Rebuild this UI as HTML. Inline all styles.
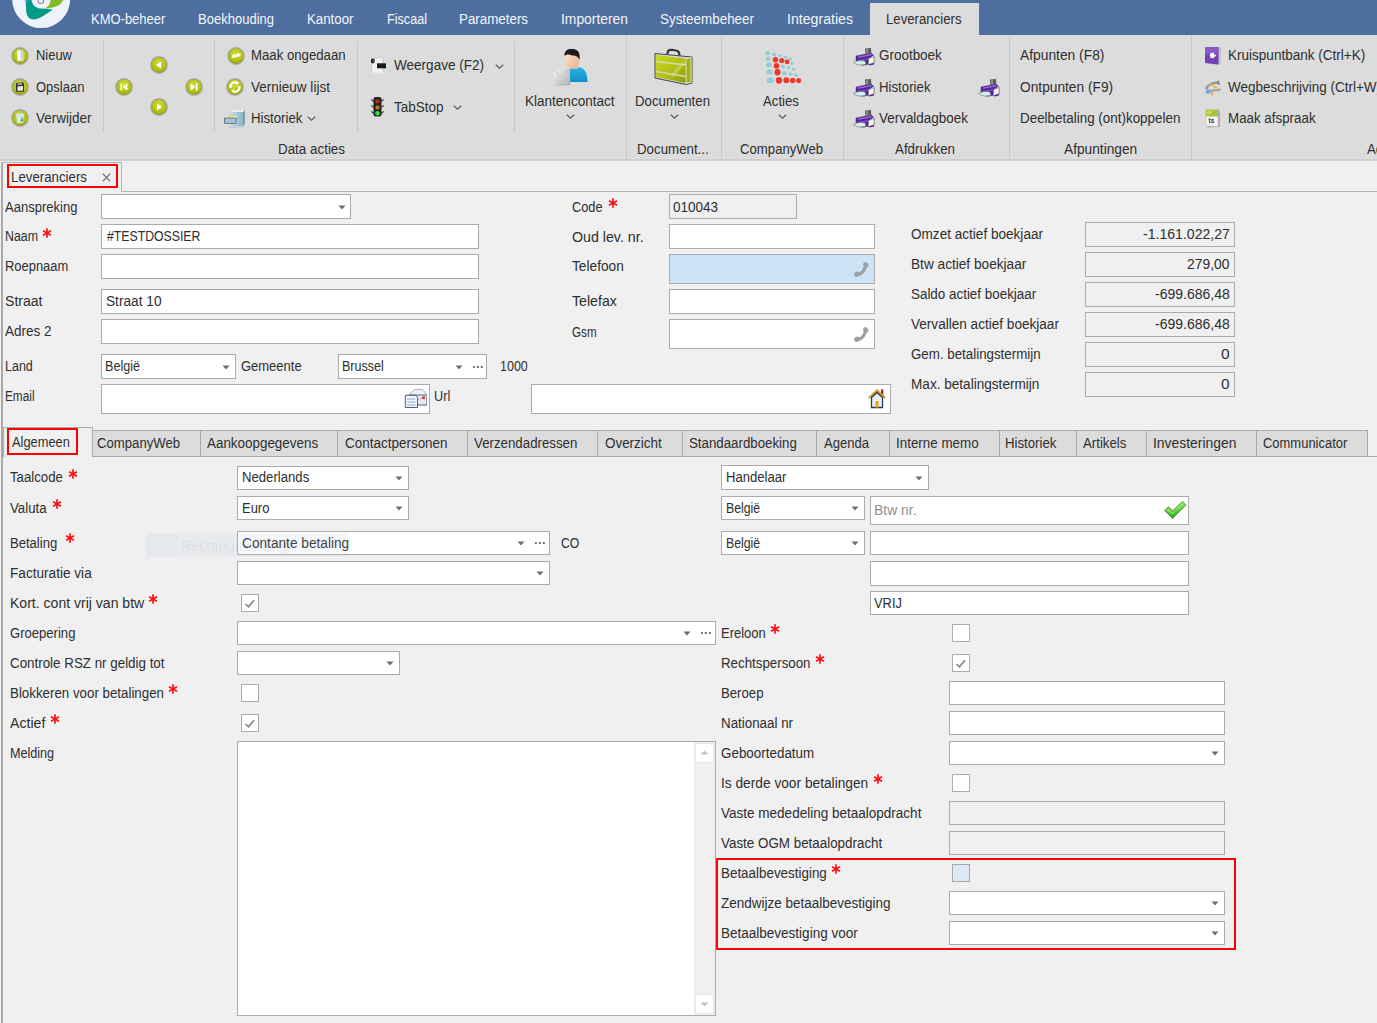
<!DOCTYPE html><html><head><meta charset="utf-8"><style>
*{margin:0;padding:0;box-sizing:border-box}
html,body{width:1377px;height:1023px;overflow:hidden}
body{background:#f0f0f0;font-family:"Liberation Sans",sans-serif;font-size:14px;color:#2e2e2e;position:relative}
.a{position:absolute}
.t{position:absolute;white-space:nowrap;line-height:15px}
</style></head><body>
<div class="a" style="left:0px;top:0px;width:1377px;height:35px;background:#4e6e9f;"></div>
<svg class="a" style="left:0px;top:0px;" width="80" height="35" viewBox="0 0 80 35">
<circle cx="41.2" cy="-0.9" r="29" fill="#eef2fb"/>
<path d="M25.6,0 L31.5,0 C32,5 36.5,8.6 41.5,8.6 L52.8,9.4 C47.5,13 40.5,18.6 34.5,19.4 C29.5,19.8 26.6,16.5 26.2,11 Z" fill="#009b82"/>
<path d="M44.2,8.9 C50.5,8.6 57.5,6.8 60.8,3.6 L63.4,0 L50.6,0 C50.2,4.2 47.8,7.4 44.2,8.9 Z" fill="#84bb24"/>
<path d="M25.6,0 L28.6,0 L26,3.5 Z" fill="#3a95d8"/>
<path d="M38.3,0 L38.3,2.2 C38.3,3 39,3.2 41,3.2 C43,3.2 43.6,3 43.6,2 L43.6,0" fill="none" stroke="#8a8a8a" stroke-width="1.1"/>
</svg>
<div class="t" style="left:90.5px;top:12px;color:#f4f6fa;transform:scaleX(0.9271);transform-origin:0 0">KMO-beheer</div>
<div class="t" style="left:198px;top:12px;color:#f4f6fa;transform:scaleX(0.9298);transform-origin:0 0">Boekhouding</div>
<div class="t" style="left:307px;top:12px;color:#f4f6fa;transform:scaleX(0.9483);transform-origin:0 0">Kantoor</div>
<div class="t" style="left:387px;top:12px;color:#f4f6fa;transform:scaleX(0.9020);transform-origin:0 0">Fiscaal</div>
<div class="t" style="left:459px;top:12px;color:#f4f6fa;transform:scaleX(0.9536);transform-origin:0 0">Parameters</div>
<div class="t" style="left:561px;top:12px;color:#f4f6fa;transform:scaleX(0.9897);transform-origin:0 0">Importeren</div>
<div class="t" style="left:660px;top:12px;color:#f4f6fa;transform:scaleX(0.9586);transform-origin:0 0">Systeembeheer</div>
<div class="t" style="left:787px;top:12px;color:#f4f6fa;transform:scaleX(1.0096);transform-origin:0 0">Integraties</div>
<div class="a" style="left:870px;top:3px;width:109px;height:32px;background:#dcdcdc;"></div>
<div class="t" style="left:886px;top:12px;transform:scaleX(0.9419);transform-origin:0 0">Leveranciers</div>
<div class="a" style="left:0px;top:35px;width:1377px;height:124px;background:#dcdcdc;"></div>
<div class="a" style="left:0px;top:159px;width:1377px;height:2px;background:#cecece;"></div>
<div class="a" style="left:103px;top:41px;width:1px;height:91px;background:#c6c6c6;"></div>
<div class="a" style="left:214px;top:41px;width:1px;height:91px;background:#c6c6c6;"></div>
<div class="a" style="left:357px;top:41px;width:1px;height:91px;background:#c6c6c6;"></div>
<div class="a" style="left:514px;top:41px;width:1px;height:91px;background:#c6c6c6;"></div>
<div class="a" style="left:626px;top:35px;width:1px;height:124px;background:#cacaca;"></div>
<div class="a" style="left:721px;top:35px;width:1px;height:124px;background:#cacaca;"></div>
<div class="a" style="left:843px;top:35px;width:1px;height:124px;background:#cacaca;"></div>
<div class="a" style="left:1009px;top:35px;width:1px;height:124px;background:#cacaca;"></div>
<div class="a" style="left:1191px;top:35px;width:1px;height:124px;background:#cacaca;"></div>
<svg class="a" style="left:10px;top:45.5px;" width="20" height="20" viewBox="0 0 20 20"><defs><radialGradient id="g200_555" cx="50%" cy="35%" r="70%"><stop offset="0" stop-color="#d4de3a"/><stop offset="0.6" stop-color="#b6c312"/><stop offset="1" stop-color="#97a40a"/></radialGradient></defs>
<circle cx="10" cy="10" r="9.2" fill="#c6c6c6"/><circle cx="10" cy="10" r="8.4" fill="#9c9c94"/><circle cx="10" cy="10" r="7.6" fill="url(#g200_555)"/><g transform="translate(0.5,0.5)"><path d="M6.5,4 L12.5,3.5 L13,14 L7,14.5 Z" fill="#f2f6f9"/><path d="M10,3.8 L12.5,3.5 L13,14 L10.5,14.3 Z" fill="#c8d6e0"/></g></svg>
<svg class="a" style="left:10px;top:76.5px;" width="20" height="20" viewBox="0 0 20 20"><defs><radialGradient id="g200_865" cx="50%" cy="35%" r="70%"><stop offset="0" stop-color="#d4de3a"/><stop offset="0.6" stop-color="#b6c312"/><stop offset="1" stop-color="#97a40a"/></radialGradient></defs>
<circle cx="10" cy="10" r="9.2" fill="#c6c6c6"/><circle cx="10" cy="10" r="8.4" fill="#9c9c94"/><circle cx="10" cy="10" r="7.6" fill="url(#g200_865)"/><g transform="translate(0.5,0.5)"><path d="M5.5,5.5 L12,4.5 L13.5,6 L13.5,14 L6.5,14.5 L5.5,13.5 Z" fill="#333"/><path d="M7,9 L12.5,8.5 L12.5,13 L7,13.5 Z" fill="#e9e9e9"/><path d="M7,5 L11.5,4.8 L11.5,7.5 L7,7.8 Z" fill="#9a9a9a"/></g></svg>
<svg class="a" style="left:10px;top:108px;" width="20" height="20" viewBox="0 0 20 20"><defs><radialGradient id="g200_1180" cx="50%" cy="35%" r="70%"><stop offset="0" stop-color="#d4de3a"/><stop offset="0.6" stop-color="#b6c312"/><stop offset="1" stop-color="#97a40a"/></radialGradient></defs>
<circle cx="10" cy="10" r="9.2" fill="#c6c6c6"/><circle cx="10" cy="10" r="8.4" fill="#9c9c94"/><circle cx="10" cy="10" r="7.6" fill="url(#g200_1180)"/><g transform="translate(0.5,0.5)"><path d="M5.5,5 L13.5,5 L12.5,14.5 L6.5,14.5 Z" fill="#d6e8f4"/><path d="M11,9 L12,12 L10,12.5" fill="none" stroke="#43b443" stroke-width="1.3"/></g></svg>
<div class="t" style="left:35.5px;top:48px;transform:scaleX(0.9228);transform-origin:0 0">Nieuw</div>
<div class="t" style="left:35.5px;top:80px;transform:scaleX(0.9282);transform-origin:0 0">Opslaan</div>
<div class="t" style="left:35.5px;top:111px;transform:scaleX(0.9639);transform-origin:0 0">Verwijder</div>
<svg class="a" style="left:114px;top:76.5px;" width="20" height="20" viewBox="0 0 20 20"><defs><radialGradient id="g1240_865" cx="50%" cy="35%" r="70%"><stop offset="0" stop-color="#d4de3a"/><stop offset="0.6" stop-color="#b6c312"/><stop offset="1" stop-color="#97a40a"/></radialGradient></defs>
<circle cx="10" cy="10" r="9.2" fill="#c6c6c6"/><circle cx="10" cy="10" r="8.4" fill="#9c9c94"/><circle cx="10" cy="10" r="7.6" fill="url(#g1240_865)"/><g transform="translate(0.5,0.5)"><path d="M6,6 L7.6,6 L7.6,13 L6,13 Z M13,6 L8,9.5 L13,13 Z" fill="#fff"/></g></svg>
<svg class="a" style="left:148.6px;top:55.400000000000006px;" width="20" height="20" viewBox="0 0 20 20"><defs><radialGradient id="g1586_654" cx="50%" cy="35%" r="70%"><stop offset="0" stop-color="#d4de3a"/><stop offset="0.6" stop-color="#b6c312"/><stop offset="1" stop-color="#97a40a"/></radialGradient></defs>
<circle cx="10" cy="10" r="9.2" fill="#c6c6c6"/><circle cx="10" cy="10" r="8.4" fill="#9c9c94"/><circle cx="10" cy="10" r="7.6" fill="url(#g1586_654)"/><g transform="translate(0.5,0.5)"><path d="M11.5,6 L6.5,9.5 L11.5,13 Z" fill="#fff"/></g></svg>
<svg class="a" style="left:148.6px;top:97px;" width="20" height="20" viewBox="0 0 20 20"><defs><radialGradient id="g1586_1070" cx="50%" cy="35%" r="70%"><stop offset="0" stop-color="#d4de3a"/><stop offset="0.6" stop-color="#b6c312"/><stop offset="1" stop-color="#97a40a"/></radialGradient></defs>
<circle cx="10" cy="10" r="9.2" fill="#c6c6c6"/><circle cx="10" cy="10" r="8.4" fill="#9c9c94"/><circle cx="10" cy="10" r="7.6" fill="url(#g1586_1070)"/><g transform="translate(0.5,0.5)"><path d="M7.5,6 L12.5,9.5 L7.5,13 Z" fill="#fff"/></g></svg>
<svg class="a" style="left:184px;top:76.5px;" width="20" height="20" viewBox="0 0 20 20"><defs><radialGradient id="g1940_865" cx="50%" cy="35%" r="70%"><stop offset="0" stop-color="#d4de3a"/><stop offset="0.6" stop-color="#b6c312"/><stop offset="1" stop-color="#97a40a"/></radialGradient></defs>
<circle cx="10" cy="10" r="9.2" fill="#c6c6c6"/><circle cx="10" cy="10" r="8.4" fill="#9c9c94"/><circle cx="10" cy="10" r="7.6" fill="url(#g1940_865)"/><g transform="translate(0.5,0.5)"><path d="M11.4,6 L13,6 L13,13 L11.4,13 Z M6,6 L11,9.5 L6,13 Z" fill="#fff"/></g></svg>
<svg class="a" style="left:225.5px;top:46px;" width="20" height="20" viewBox="0 0 20 20"><defs><radialGradient id="g2355_560" cx="50%" cy="35%" r="70%"><stop offset="0" stop-color="#d4de3a"/><stop offset="0.6" stop-color="#b6c312"/><stop offset="1" stop-color="#97a40a"/></radialGradient></defs>
<circle cx="10" cy="10" r="9.2" fill="#c6c6c6"/><circle cx="10" cy="10" r="8.4" fill="#9c9c94"/><circle cx="10" cy="10" r="7.6" fill="url(#g2355_560)"/><g transform="translate(0.5,0.5)"><path d="M5,11 L6.5,7.5 L9.5,8.2 L12,6.5 L14.5,8 L13,10 L9,10.5 L7.5,11.5 Z" fill="#fff"/></g></svg>
<svg class="a" style="left:225px;top:76.5px;" width="20" height="20" viewBox="0 0 20 20"><defs><radialGradient id="g2350_865" cx="50%" cy="35%" r="70%"><stop offset="0" stop-color="#d4de3a"/><stop offset="0.6" stop-color="#b6c312"/><stop offset="1" stop-color="#97a40a"/></radialGradient></defs>
<circle cx="10" cy="10" r="9.2" fill="#c6c6c6"/><circle cx="10" cy="10" r="8.4" fill="#9c9c94"/><circle cx="10" cy="10" r="7.6" fill="url(#g2350_865)"/><g transform="translate(0.5,0.5)"><path d="M5.2,10.5 A4.5,4.5 0 0 1 11.5,5.2" fill="none" stroke="#fff" stroke-width="2"/><path d="M10.5,3.5 L13.5,5.5 L10.5,7.5 Z" fill="#fff"/><path d="M13.8,8.5 A4.5,4.5 0 0 1 7.5,13.8" fill="none" stroke="#fff" stroke-width="2"/><path d="M8.5,11.5 L5.5,13.5 L8.5,15.5 Z" fill="#fff"/></g></svg>
<div class="t" style="left:250.5px;top:48px;transform:scaleX(0.9421);transform-origin:0 0">Maak ongedaan</div>
<div class="t" style="left:250.5px;top:80px;transform:scaleX(0.9657);transform-origin:0 0">Vernieuw lijst</div>
<div class="t" style="left:250.5px;top:111px;transform:scaleX(0.9439);transform-origin:0 0">Historiek</div>
<svg class="a" style="left:224px;top:109px;" width="22" height="19" viewBox="0 0 22 19"><defs><linearGradient id="hc" x1="0" y1="0" x2="1" y2="0"><stop offset="0" stop-color="#c6e0ea"/><stop offset="1" stop-color="#8fb4c4"/></linearGradient></defs>
<path d="M6,3 L9,1 L21,1 L19,3 Z" fill="#e2eff4"/>
<path d="M6,3 L19,3 L19,17 L6,17 Z" fill="url(#hc)"/><path d="M19,3 L21,1 L21,15 L19,17 Z" fill="#7f9fae"/>
<path d="M0.5,9 L4,7 L13,7 L12,9 Z" fill="#dfe9ee"/>
<path d="M0.5,9 L12,9 L12,14.5 L0.5,14.5 Z" fill="#a7c0cc" stroke="#4f6a78" stroke-width="0.8"/>
<path d="M3,7.5 L6,6 L10.5,6 L9,8 Z" fill="#f2d447"/>
<path d="M4,18 L20,18" stroke="#9aa" stroke-width="1" opacity="0.5"/></svg>
<svg class="a" style="left:306.5px;top:115.5px;" width="9" height="5" viewBox="0 0 9 5"><polyline points="0.8,0.8 4.5,4.2 8.2,0.8" fill="none" stroke="#5a5a5a" stroke-width="1.2"/></svg>
<svg class="a" style="left:369px;top:55px;" width="18" height="20" viewBox="0 0 18 20"><path d="M2.5,4 L12,2 L14,4 L14,16 C14,18 11,18.5 8,18.5 C5,18.5 2.5,18 2.5,16 Z" fill="#f2f2f2" stroke="#c0c0c0" stroke-width="0.7"/>
<path d="M11,1 C13,0.5 15,1.5 15,3.5 L12,4 Z" fill="#dadada"/>
<ellipse cx="3.8" cy="6" rx="2" ry="2.4" fill="#1e1e1e"/><circle cx="4.3" cy="6" r="0.9" fill="#2a8a3a"/>
<rect x="8" y="8.3" width="9" height="5" fill="#1a1a1a"/><path d="M2,17 L15,17 L15,19 L2,19 Z" fill="#e6e6e6"/></svg>
<div class="t" style="left:393.5px;top:58px;transform:scaleX(0.9677);transform-origin:0 0">Weergave (F2)</div>
<svg class="a" style="left:494.5px;top:63.5px;" width="9" height="5" viewBox="0 0 9 5"><polyline points="0.8,0.8 4.5,4.2 8.2,0.8" fill="none" stroke="#5a5a5a" stroke-width="1.2"/></svg>
<svg class="a" style="left:370px;top:96px;" width="15" height="22" viewBox="0 0 15 22"><rect x="3.5" y="1" width="8" height="19.5" rx="2" fill="#262626"/>
<path d="M0.5,3 L3.5,4 L3.5,6.5 Z M14.5,3 L11.5,4 L11.5,6.5 Z M0.5,9 L3.5,10 L3.5,12.5 Z M14.5,9 L11.5,10 L11.5,12.5 Z M0.5,15 L3.5,16 L3.5,18.5 Z M14.5,15 L11.5,16 L11.5,18.5 Z" fill="#333"/>
<circle cx="7.5" cy="5.5" r="2" fill="#b8321e"/><circle cx="7.5" cy="11.5" r="2" fill="#c97d12"/><circle cx="7.5" cy="17.2" r="2.3" fill="#2ee03a"/></svg>
<div class="t" style="left:393.5px;top:100px;transform:scaleX(0.9636);transform-origin:0 0">TabStop</div>
<svg class="a" style="left:452.5px;top:104.5px;" width="9" height="5" viewBox="0 0 9 5"><polyline points="0.8,0.8 4.5,4.2 8.2,0.8" fill="none" stroke="#5a5a5a" stroke-width="1.2"/></svg>
<div class="t" style="left:278px;top:142px;transform:scaleX(0.9567);transform-origin:0 0">Data acties</div>
<svg class="a" style="left:550px;top:46px;" width="40" height="42" viewBox="0 0 40 42"><defs><linearGradient id="kc" x1="0" y1="0" x2="0" y2="1"><stop offset="0" stop-color="#2ab4e4"/><stop offset="1" stop-color="#1290c8"/></linearGradient>
<linearGradient id="kf" x1="0" y1="0" x2="1" y2="1"><stop offset="0" stop-color="#fde3cf"/><stop offset="1" stop-color="#eab08a"/></linearGradient>
<linearGradient id="ke" x1="0" y1="0" x2="1" y2="1"><stop offset="0" stop-color="#f4f4f4"/><stop offset="1" stop-color="#a9adb0"/></linearGradient></defs>
<path d="M15,36 C15,26 20,21 27,21 C34,21 37.5,26 37.5,36 Z" fill="url(#kc)"/>
<path d="M22,19 L28,19 L27.5,23 L22.5,23 Z" fill="#e8b894"/>
<ellipse cx="22" cy="13.5" rx="7.2" ry="9" fill="url(#kf)"/>
<path d="M14.5,10 C14,4 18.5,2.5 23,3 C28,3.5 30.5,6.5 29.5,14 C28.5,11 26,9 22,9.5 C19,8 16.5,8.5 14.5,10 Z" fill="#1c1c1c"/>
<path d="M3.5,24 L19.5,22 L20.5,39 L4.5,40.5 Z" fill="url(#ke)"/>
<path d="M3.5,24 L12,31.5 L19.5,22" fill="none" stroke="#c4c8cb" stroke-width="1"/></svg>
<div class="t" style="left:524.5px;top:94px;transform:scaleX(0.9663);transform-origin:0 0">Klantencontact</div>
<svg class="a" style="left:565.5px;top:113.5px;" width="9" height="5" viewBox="0 0 9 5"><polyline points="0.8,0.8 4.5,4.2 8.2,0.8" fill="none" stroke="#5a5a5a" stroke-width="1.2"/></svg>
<svg class="a" style="left:652px;top:47px;" width="42" height="40" viewBox="0 0 42 40"><defs><linearGradient id="bc" x1="0" y1="0" x2="1" y2="1"><stop offset="0" stop-color="#cbd91e"/><stop offset="0.5" stop-color="#b3c118"/><stop offset="1" stop-color="#8e9a0c"/></linearGradient></defs>
<path d="M15.5,7 C15.5,3 17,2.5 21.5,3 C26,3.5 27.5,4.5 27.5,8.5" fill="none" stroke="#333" stroke-width="2.2"/>
<path d="M3,6.5 L40,10 L40,36 L34,37.5 L3,31 Z" fill="#d8d8d8" stroke="#444" stroke-width="1"/>
<path d="M4,8 L34,11.5 L34,36 L4,30 Z" fill="url(#bc)"/>
<path d="M34,11.5 L39,10.5 L39,35.5 L34,36 Z" fill="#a4b214" stroke="#e8e8e8" stroke-width="0.8"/>
<path d="M4,14.5 L34,18" stroke="#d6dcb8" stroke-width="1.6"/><path d="M4,24.5 L34,29.5" stroke="#d0d6b0" stroke-width="1.6"/>
<path d="M18,28 L30,14 L34,16 L22,30 Z" fill="#e8ef9a" opacity="0.35"/></svg>
<div class="t" style="left:635.3px;top:94px;transform:scaleX(0.9448);transform-origin:0 0">Documenten</div>
<svg class="a" style="left:669.5px;top:113.5px;" width="9" height="5" viewBox="0 0 9 5"><polyline points="0.8,0.8 4.5,4.2 8.2,0.8" fill="none" stroke="#5a5a5a" stroke-width="1.2"/></svg>
<svg class="a" style="left:760px;top:46px;" width="46" height="44" viewBox="0 0 46 44"><ellipse cx="7.5" cy="7.2" rx="2.5" ry="2.1" fill="#92ccd6"/><ellipse cx="14.0" cy="8.5" rx="2.2" ry="1.8" fill="#92ccd6"/><ellipse cx="20.0" cy="9.8" rx="1.9" ry="1.5" fill="#92ccd6"/><ellipse cx="25.5" cy="11.2" rx="1.7" ry="1.4" fill="#92ccd6"/><ellipse cx="30.5" cy="12.8" rx="1.7" ry="1.4" fill="#92ccd6"/><ellipse cx="8.0" cy="12.8" rx="2.5" ry="2.1" fill="#92ccd6"/><ellipse cx="31.8" cy="17.5" rx="1.8" ry="1.4" fill="#92ccd6"/><ellipse cx="8.8" cy="19.0" rx="2.9" ry="2.3" fill="#92ccd6"/><ellipse cx="22.8" cy="20.6" rx="2.2" ry="1.8" fill="#92ccd6"/><ellipse cx="28.5" cy="21.5" rx="2.0" ry="1.6" fill="#92ccd6"/><ellipse cx="33.8" cy="23.4" rx="1.8" ry="1.4" fill="#92ccd6"/><ellipse cx="9.5" cy="26.0" rx="3.1" ry="2.5" fill="#92ccd6"/><ellipse cx="24.5" cy="27.2" rx="2.4" ry="2.0" fill="#92ccd6"/><ellipse cx="30.5" cy="28.0" rx="2.2" ry="1.8" fill="#92ccd6"/><ellipse cx="36.0" cy="29.0" rx="1.9" ry="1.5" fill="#92ccd6"/><ellipse cx="10.3" cy="34.4" rx="3.4" ry="2.8" fill="#92ccd6"/><ellipse cx="15.5" cy="13.8" rx="2.7" ry="2.8" fill="#ec3a2a"/><ellipse cx="21.8" cy="14.6" rx="2.6" ry="2.7" fill="#ec3a2a"/><ellipse cx="27.2" cy="15.7" rx="2.4" ry="2.5" fill="#ec3a2a"/><ellipse cx="16.5" cy="19.8" rx="2.8" ry="2.9" fill="#ec3a2a"/><ellipse cx="17.5" cy="26.3" rx="3.0" ry="3.2" fill="#ec3a2a"/><ellipse cx="19.0" cy="34.3" rx="3.2" ry="3.4" fill="#ec3a2a"/><ellipse cx="26.3" cy="34.3" rx="2.9" ry="3.0" fill="#ec3a2a"/><ellipse cx="32.6" cy="34.5" rx="2.7" ry="2.8" fill="#ec3a2a"/><ellipse cx="38.6" cy="34.5" rx="2.5" ry="2.6" fill="#ec3a2a"/></svg>
<div class="t" style="left:763.4px;top:94px;transform:scaleX(0.9417);transform-origin:0 0">Acties</div>
<svg class="a" style="left:778.0px;top:113.5px;" width="9" height="5" viewBox="0 0 9 5"><polyline points="0.8,0.8 4.5,4.2 8.2,0.8" fill="none" stroke="#5a5a5a" stroke-width="1.2"/></svg>
<div class="t" style="left:636.6px;top:142px;transform:scaleX(0.9500);transform-origin:0 0">Document...</div>
<div class="t" style="left:739.5px;top:142px;transform:scaleX(0.9406);transform-origin:0 0">CompanyWeb</div>
<svg class="a" style="left:853px;top:48px;" width="22" height="18" viewBox="0 0 22 18"><path d="M12,0.5 L18,0 L18.5,7 L12.5,7.5 Z" fill="#5c5c5c"/><path d="M13,1 L15,0.8 L15.3,7 L13.3,7.2 Z" fill="#8a8a8a"/>
<path d="M3,8 L18,5 L21,7.5 L21,15 L9,17.5 L3,14 Z" fill="#e4e4e4" stroke="#5a5a5a" stroke-width="0.6"/>
<path d="M3,8 L18,5 L20.5,7.2 L16,11 L15.5,16.5 L9,17 L3,13.5 Z" fill="#58289a"/>
<path d="M5,9.3 L18.5,6.6" stroke="#a07ad8" stroke-width="1.1"/><path d="M5,12.5 L15,10.8" stroke="#8a5ac8" stroke-width="0.9"/>
<path d="M15.5,10.5 L21,8.8 L21,15 L15.5,16.8 Z" fill="#f2f2f2" stroke="#6a6a6a" stroke-width="0.5"/>
<path d="M16,16.2 L21,14.8 L21,16.4 L16.5,17.6 Z" fill="#58289a"/>
<path d="M0.5,14.5 C3,12.5 9,12 12,13 L13,16 C9,17.5 4,17.5 0.5,14.5 Z" fill="#d6eef0" stroke="#5e6e70" stroke-width="0.6"/></svg>
<svg class="a" style="left:853px;top:79px;" width="22" height="18" viewBox="0 0 22 18"><path d="M12,0.5 L18,0 L18.5,7 L12.5,7.5 Z" fill="#5c5c5c"/><path d="M13,1 L15,0.8 L15.3,7 L13.3,7.2 Z" fill="#8a8a8a"/>
<path d="M3,8 L18,5 L21,7.5 L21,15 L9,17.5 L3,14 Z" fill="#e4e4e4" stroke="#5a5a5a" stroke-width="0.6"/>
<path d="M3,8 L18,5 L20.5,7.2 L16,11 L15.5,16.5 L9,17 L3,13.5 Z" fill="#58289a"/>
<path d="M5,9.3 L18.5,6.6" stroke="#a07ad8" stroke-width="1.1"/><path d="M5,12.5 L15,10.8" stroke="#8a5ac8" stroke-width="0.9"/>
<path d="M15.5,10.5 L21,8.8 L21,15 L15.5,16.8 Z" fill="#f2f2f2" stroke="#6a6a6a" stroke-width="0.5"/>
<path d="M16,16.2 L21,14.8 L21,16.4 L16.5,17.6 Z" fill="#58289a"/>
<path d="M0.5,14.5 C3,12.5 9,12 12,13 L13,16 C9,17.5 4,17.5 0.5,14.5 Z" fill="#d6eef0" stroke="#5e6e70" stroke-width="0.6"/></svg>
<svg class="a" style="left:853px;top:110px;" width="22" height="18" viewBox="0 0 22 18"><path d="M12,0.5 L18,0 L18.5,7 L12.5,7.5 Z" fill="#5c5c5c"/><path d="M13,1 L15,0.8 L15.3,7 L13.3,7.2 Z" fill="#8a8a8a"/>
<path d="M3,8 L18,5 L21,7.5 L21,15 L9,17.5 L3,14 Z" fill="#e4e4e4" stroke="#5a5a5a" stroke-width="0.6"/>
<path d="M3,8 L18,5 L20.5,7.2 L16,11 L15.5,16.5 L9,17 L3,13.5 Z" fill="#58289a"/>
<path d="M5,9.3 L18.5,6.6" stroke="#a07ad8" stroke-width="1.1"/><path d="M5,12.5 L15,10.8" stroke="#8a5ac8" stroke-width="0.9"/>
<path d="M15.5,10.5 L21,8.8 L21,15 L15.5,16.8 Z" fill="#f2f2f2" stroke="#6a6a6a" stroke-width="0.5"/>
<path d="M16,16.2 L21,14.8 L21,16.4 L16.5,17.6 Z" fill="#58289a"/>
<path d="M0.5,14.5 C3,12.5 9,12 12,13 L13,16 C9,17.5 4,17.5 0.5,14.5 Z" fill="#d6eef0" stroke="#5e6e70" stroke-width="0.6"/></svg>
<svg class="a" style="left:978px;top:79px;" width="22" height="18" viewBox="0 0 22 18"><path d="M12,0.5 L18,0 L18.5,7 L12.5,7.5 Z" fill="#5c5c5c"/><path d="M13,1 L15,0.8 L15.3,7 L13.3,7.2 Z" fill="#8a8a8a"/>
<path d="M3,8 L18,5 L21,7.5 L21,15 L9,17.5 L3,14 Z" fill="#e4e4e4" stroke="#5a5a5a" stroke-width="0.6"/>
<path d="M3,8 L18,5 L20.5,7.2 L16,11 L15.5,16.5 L9,17 L3,13.5 Z" fill="#58289a"/>
<path d="M5,9.3 L18.5,6.6" stroke="#a07ad8" stroke-width="1.1"/><path d="M5,12.5 L15,10.8" stroke="#8a5ac8" stroke-width="0.9"/>
<path d="M15.5,10.5 L21,8.8 L21,15 L15.5,16.8 Z" fill="#f2f2f2" stroke="#6a6a6a" stroke-width="0.5"/>
<path d="M16,16.2 L21,14.8 L21,16.4 L16.5,17.6 Z" fill="#58289a"/>
<path d="M0.5,14.5 C3,12.5 9,12 12,13 L13,16 C9,17.5 4,17.5 0.5,14.5 Z" fill="#d6eef0" stroke="#5e6e70" stroke-width="0.6"/></svg>
<div class="t" style="left:879.2px;top:48px;transform:scaleX(0.9606);transform-origin:0 0">Grootboek</div>
<div class="t" style="left:879.2px;top:80px;transform:scaleX(0.9457);transform-origin:0 0">Historiek</div>
<div class="t" style="left:879.2px;top:111px;transform:scaleX(0.9598);transform-origin:0 0">Vervaldagboek</div>
<div class="t" style="left:895px;top:142px;transform:scaleX(0.9519);transform-origin:0 0">Afdrukken</div>
<div class="t" style="left:1019.6px;top:48px;transform:scaleX(0.9860);transform-origin:0 0">Afpunten (F8)</div>
<div class="t" style="left:1019.6px;top:80px;transform:scaleX(0.9806);transform-origin:0 0">Ontpunten (F9)</div>
<div class="t" style="left:1019.6px;top:111px;transform:scaleX(0.9585);transform-origin:0 0">Deelbetaling (ont)koppelen</div>
<div class="t" style="left:1063.5px;top:142px;transform:scaleX(0.9795);transform-origin:0 0">Afpuntingen</div>
<svg class="a" style="left:1204px;top:46px;" width="18" height="19" viewBox="0 0 18 19"><path d="M1,1.5 L14,0.5 L17,2 L17,18 L14,19 L1,17 Z" fill="#c0c4c4"/>
<path d="M1,1.5 L14.5,1 L14.5,18.5 L1,17 Z" fill="#7440b4"/><path d="M1,1.5 L14.5,1 L14.5,8 L1,8.5 Z" fill="#8a5ac4"/>
<path d="M6,9 C6,6.5 9.5,6 10.5,8.5 L12.5,9.5 L10.5,11 C9.5,13 6,12.5 6,10 Z" fill="#fff"/></svg>
<svg class="a" style="left:1204px;top:79px;" width="18" height="18" viewBox="0 0 18 18"><path d="M2,10 C4,5 10,3 15,4" fill="none" stroke="#9a9a9a" stroke-width="2.4"/>
<path d="M5,6 C7,4.5 9,6 11,8 L13,9" fill="none" stroke="#e6b030" stroke-width="1.6"/>
<path d="M2,11 L17,9.5 L16,12 L3,13.5 Z" fill="#a8a8a8"/><path d="M13,3 L15,2 M14,5 L16,5" stroke="#555" stroke-width="1"/>
<circle cx="4" cy="12.5" r="2.4" fill="#6ab0e0"/><path d="M7,13 L9,16" stroke="#e0a030" stroke-width="1.4"/></svg>
<svg class="a" style="left:1205px;top:108px;" width="16" height="20" viewBox="0 0 16 20"><path d="M1,1.5 L13,1 L15,3 L15,19 L3,19.5 L1,18 Z" fill="#aeb0b0"/>
<path d="M1,1.5 L13,1 L13,18.5 L1,18 Z" fill="#f4f4f4" stroke="#b0b0b0" stroke-width="0.5"/>
<path d="M1,2 L13,1.5 L13,8.5 L1,8.5 Z" fill="#a9c23a"/><path d="M2,3 L7,2.5 L6,6 L2,6.5 Z" fill="#c8dc60"/>
<text x="3.5" y="14.5" font-size="6.5" font-weight="bold" fill="#333" font-family="Liberation Sans">ts</text></svg>
<div class="t" style="left:1228px;top:48px;transform:scaleX(0.9669);transform-origin:0 0">Kruispuntbank (Ctrl+K)</div>
<div class="t" style="left:1228px;top:80px;transform:scaleX(0.9633);transform-origin:0 0">Wegbeschrijving (Ctrl+W)</div>
<div class="t" style="left:1228px;top:111px;transform:scaleX(0.9540);transform-origin:0 0">Maak afspraak</div>
<div class="t" style="left:1367.4px;top:142px;transform:scaleX(0.9417);transform-origin:0 0">Acties</div>
<div class="a" style="left:121px;top:191px;width:1256px;height:1px;background:#b4b4b4;"></div>
<div class="a" style="left:1px;top:162px;width:121px;height:30px;background:#f0f0f0;border:1px solid #b4b4b4;border-bottom:none"></div>
<div class="a" style="left:7px;top:164px;width:111px;height:24px;border:2px solid #ff0000"></div>
<div class="t" style="left:10.5px;top:170px;transform:scaleX(0.9482);transform-origin:0 0">Leveranciers</div>
<svg class="a" style="left:102px;top:173px;" width="9" height="9" viewBox="0 0 9 9"><path d="M0.8,0.8 L8.2,8.2 M8.2,0.8 L0.8,8.2" stroke="#7a7a7a" stroke-width="1.3"/></svg>
<div class="a" style="left:1px;top:163px;width:2px;height:860px;background:#a9a9a9;"></div>
<div class="t" style="left:4.7px;top:200px;transform:scaleX(0.9315);transform-origin:0 0">Aanspreking</div>
<div class="a" style="left:101px;top:194px;width:250px;height:25px;background:#fff;border:1px solid #ababab;"></div>
<svg class="a" style="left:338px;top:205px;" width="8" height="5" viewBox="0 0 8 5"><polygon points="0.5,0.5 7.5,0.5 4,4.5" fill="#6e6e6e"/></svg>
<div class="t" style="left:4.7px;top:229px;transform:scaleX(0.8836);transform-origin:0 0">Naam</div>
<svg class="a" style="left:42px;top:228px;" width="10" height="10" viewBox="0 0 10 10"><g stroke="#ff1010" stroke-width="1.7" stroke-linecap="butt"><line x1="5" y1="0.3" x2="5" y2="9.7"/><line x1="1" y1="2.7" x2="9" y2="7.3"/><line x1="1" y1="7.3" x2="9" y2="2.7"/></g></svg>
<div class="a" style="left:101px;top:224px;width:378px;height:25px;background:#fff;border:1px solid #ababab;"></div>
<div class="t" style="left:106.6px;top:229px;transform:scaleX(0.8764);transform-origin:0 0">#TESTDOSSIER</div>
<div class="t" style="left:4.7px;top:259px;transform:scaleX(0.9228);transform-origin:0 0">Roepnaam</div>
<div class="a" style="left:101px;top:254px;width:378px;height:25px;background:#fff;border:1px solid #ababab;"></div>
<div class="t" style="left:4.7px;top:294px;transform:scaleX(1.0040);transform-origin:0 0">Straat</div>
<div class="a" style="left:101px;top:289px;width:378px;height:25px;background:#fff;border:1px solid #ababab;"></div>
<div class="t" style="left:105.6px;top:294px;transform:scaleX(0.9769);transform-origin:0 0">Straat 10</div>
<div class="t" style="left:4.7px;top:324px;transform:scaleX(0.9638);transform-origin:0 0">Adres 2</div>
<div class="a" style="left:101px;top:319px;width:378px;height:25px;background:#fff;border:1px solid #ababab;"></div>
<div class="t" style="left:4.7px;top:359px;transform:scaleX(0.8926);transform-origin:0 0">Land</div>
<div class="a" style="left:101px;top:354px;width:135px;height:25px;background:#fff;border:1px solid #ababab;"></div>
<svg class="a" style="left:222px;top:365px;" width="8" height="5" viewBox="0 0 8 5"><polygon points="0.5,0.5 7.5,0.5 4,4.5" fill="#6e6e6e"/></svg>
<div class="t" style="left:105.3px;top:359px;transform:scaleX(0.8994);transform-origin:0 0">België</div>
<div class="t" style="left:241px;top:359px;transform:scaleX(0.9270);transform-origin:0 0">Gemeente</div>
<div class="a" style="left:338px;top:354px;width:149px;height:25px;background:#fff;border:1px solid #ababab;"></div>
<svg class="a" style="left:455px;top:365px;" width="8" height="5" viewBox="0 0 8 5"><polygon points="0.5,0.5 7.5,0.5 4,4.5" fill="#6e6e6e"/></svg>
<svg class="a" style="left:473px;top:366px;" width="10" height="2" viewBox="0 0 10 2"><rect x="-0.2" y="0" width="2" height="2" fill="#6e6e6e"/><rect x="3.8" y="0" width="2" height="2" fill="#6e6e6e"/><rect x="7.8" y="0" width="2" height="2" fill="#6e6e6e"/></svg>
<div class="t" style="left:342px;top:359px;transform:scaleX(0.8933);transform-origin:0 0">Brussel</div>
<div class="t" style="left:499.6px;top:359px;transform:scaleX(0.8926);transform-origin:0 0">1000</div>
<div class="t" style="left:4.7px;top:389px;transform:scaleX(0.8427);transform-origin:0 0">Email</div>
<div class="a" style="left:101px;top:384px;width:329px;height:30px;background:#fff;border:1px solid #ababab;"></div>
<svg class="a" style="left:404px;top:388px;" width="23" height="21" viewBox="0 0 23 21"><path d="M5,7 L10.2,1.5 L18.5,1.5 L23,7" fill="#eef2f8" stroke="#9aaac0" stroke-width="0.9"/>
<path d="M5,7 L23,7 L23,17 L5,17 Z" fill="#e4eaf4" stroke="#3d4e6e" stroke-width="0.9"/>
<path d="M5,7 L14,12 L23,7" fill="none" stroke="#a8b8d0" stroke-width="0.8"/>
<rect x="18" y="8.5" width="3" height="2.6" fill="#e0401a"/>
<path d="M1.3,7.3 L11.5,7.3 L13.5,9.5 L13.5,19.5 L1.3,19.5 Z" fill="#f4f7fc" stroke="#3d4e6e" stroke-width="0.9"/>
<path d="M3,11 H11.5 M3,14 H11.5 M3,17 H11.5" stroke="#8aa4d8" stroke-width="1"/></svg>
<div class="t" style="left:434.3px;top:389px;transform:scaleX(0.9059);transform-origin:0 0">Url</div>
<div class="a" style="left:531px;top:384px;width:360px;height:30px;background:#fff;border:1px solid #ababab;"></div>
<svg class="a" style="left:867px;top:388px;" width="20" height="21" viewBox="0 0 20 21"><rect x="14" y="1.5" width="2.4" height="6" fill="#a02828"/>
<path d="M2,10 L10,2.5 L18,10" fill="none" stroke="#d89a18" stroke-width="2.2" stroke-linejoin="miter"/>
<path d="M4.5,9.5 L10,4.5 L15.5,9.5 L15.5,19.5 L4.5,19.5 Z" fill="#e9eef8" stroke="#2e3a58" stroke-width="1.3"/>
<rect x="8.5" y="13" width="3" height="6.5" fill="#e8a810"/></svg>
<div class="t" style="left:571.9px;top:200px;transform:scaleX(0.9143);transform-origin:0 0">Code</div>
<svg class="a" style="left:607.5px;top:198px;" width="10" height="10" viewBox="0 0 10 10"><g stroke="#ff1010" stroke-width="1.7" stroke-linecap="butt"><line x1="5" y1="0.3" x2="5" y2="9.7"/><line x1="1" y1="2.7" x2="9" y2="7.3"/><line x1="1" y1="7.3" x2="9" y2="2.7"/></g></svg>
<div class="a" style="left:669px;top:194px;width:128px;height:25px;background:#f0f0f0;border:1px solid #ababab;"></div>
<div class="t" style="left:673px;top:200px;transform:scaleX(0.9632);transform-origin:0 0">010043</div>
<div class="t" style="left:571.9px;top:230px;transform:scaleX(1.0148);transform-origin:0 0">Oud lev. nr.</div>
<div class="a" style="left:669px;top:224px;width:206px;height:25px;background:#fff;border:1px solid #ababab;"></div>
<div class="t" style="left:571.9px;top:259px;transform:scaleX(0.9786);transform-origin:0 0">Telefoon</div>
<div class="a" style="left:669px;top:254px;width:206px;height:30px;background:#cce4f7;border:1px solid #ababab;"></div>
<svg class="a" style="left:853px;top:260px;" width="17" height="18" viewBox="0 0 17 18"><path d="M3.5,14.5 C6,15 11,13 12.5,6" fill="none" stroke="#a0a0a0" stroke-width="3.2" stroke-linecap="round"/><ellipse cx="4" cy="14.2" rx="2.9" ry="2.5" fill="#a0a0a0" transform="rotate(-30 4 14.2)"/><ellipse cx="12.8" cy="5" rx="2.5" ry="2.9" fill="#a0a0a0" transform="rotate(-30 12.8 5)"/></svg>
<div class="t" style="left:571.9px;top:294px;transform:scaleX(1.0122);transform-origin:0 0">Telefax</div>
<div class="a" style="left:669px;top:289px;width:206px;height:25px;background:#fff;border:1px solid #ababab;"></div>
<div class="t" style="left:571.9px;top:325px;transform:scaleX(0.8324);transform-origin:0 0">Gsm</div>
<div class="a" style="left:669px;top:319px;width:206px;height:30px;background:#fff;border:1px solid #ababab;"></div>
<svg class="a" style="left:853px;top:325px;" width="17" height="18" viewBox="0 0 17 18"><path d="M3.5,14.5 C6,15 11,13 12.5,6" fill="none" stroke="#a0a0a0" stroke-width="3.2" stroke-linecap="round"/><ellipse cx="4" cy="14.2" rx="2.9" ry="2.5" fill="#a0a0a0" transform="rotate(-30 4 14.2)"/><ellipse cx="12.8" cy="5" rx="2.5" ry="2.9" fill="#a0a0a0" transform="rotate(-30 12.8 5)"/></svg>
<div class="t" style="left:910.6px;top:227px;transform:scaleX(0.9693);transform-origin:0 0">Omzet actief boekjaar</div>
<div class="a" style="left:1085px;top:222px;width:150px;height:25px;background:#f0f0f0;border:1px solid #ababab;"></div>
<div class="t" style="left:1142.9px;top:227px;transform:scaleX(1.0057);transform-origin:0 0">-1.161.022,27</div>
<div class="t" style="left:910.6px;top:257px;transform:scaleX(0.9748);transform-origin:0 0">Btw actief boekjaar</div>
<div class="a" style="left:1085px;top:252px;width:150px;height:25px;background:#f0f0f0;border:1px solid #ababab;"></div>
<div class="t" style="left:1187.4px;top:257px;transform:scaleX(0.9902);transform-origin:0 0">279,00</div>
<div class="t" style="left:910.6px;top:287px;transform:scaleX(0.9575);transform-origin:0 0">Saldo actief boekjaar</div>
<div class="a" style="left:1085px;top:282px;width:150px;height:25px;background:#f0f0f0;border:1px solid #ababab;"></div>
<div class="t" style="left:1155.0px;top:287px;transform:scaleX(1.0009);transform-origin:0 0">-699.686,48</div>
<div class="t" style="left:910.6px;top:317px;transform:scaleX(0.9696);transform-origin:0 0">Vervallen actief boekjaar</div>
<div class="a" style="left:1085px;top:312px;width:150px;height:25px;background:#f0f0f0;border:1px solid #ababab;"></div>
<div class="t" style="left:1155.0px;top:317px;transform:scaleX(1.0009);transform-origin:0 0">-699.686,48</div>
<div class="t" style="left:910.6px;top:347px;transform:scaleX(0.9518);transform-origin:0 0">Gem. betalingstermijn</div>
<div class="a" style="left:1085px;top:342px;width:150px;height:25px;background:#f0f0f0;border:1px solid #ababab;"></div>
<div class="t" style="left:1221.2px;top:347px;transform:scaleX(1.1045);transform-origin:0 0">0</div>
<div class="t" style="left:910.6px;top:377px;transform:scaleX(0.9707);transform-origin:0 0">Max. betalingstermijn</div>
<div class="a" style="left:1085px;top:372px;width:150px;height:25px;background:#f0f0f0;border:1px solid #ababab;"></div>
<div class="t" style="left:1221.2px;top:377px;transform:scaleX(1.1045);transform-origin:0 0">0</div>
<div class="a" style="left:3px;top:456px;width:1374px;height:1px;background:#ababab;"></div>
<div class="a" style="left:92px;top:430px;width:109px;height:27px;background:#dcdcdc;border:1px solid #ababab"></div>
<div class="t" style="left:96.7px;top:436px;transform:scaleX(0.9395);transform-origin:0 0">CompanyWeb</div>
<div class="a" style="left:200px;top:430px;width:138px;height:27px;background:#dcdcdc;border:1px solid #ababab"></div>
<div class="t" style="left:206.7px;top:436px;transform:scaleX(0.9579);transform-origin:0 0">Aankoopgegevens</div>
<div class="a" style="left:337px;top:430px;width:131px;height:27px;background:#dcdcdc;border:1px solid #ababab"></div>
<div class="t" style="left:344.8px;top:436px;transform:scaleX(0.9622);transform-origin:0 0">Contactpersonen</div>
<div class="a" style="left:467px;top:430px;width:131px;height:27px;background:#dcdcdc;border:1px solid #ababab"></div>
<div class="t" style="left:474.4px;top:436px;transform:scaleX(0.9489);transform-origin:0 0">Verzendadressen</div>
<div class="a" style="left:597px;top:430px;width:86px;height:27px;background:#dcdcdc;border:1px solid #ababab"></div>
<div class="t" style="left:604.8px;top:436px;transform:scaleX(0.9590);transform-origin:0 0">Overzicht</div>
<div class="a" style="left:682px;top:430px;width:135px;height:27px;background:#dcdcdc;border:1px solid #ababab"></div>
<div class="t" style="left:688.5px;top:436px;transform:scaleX(0.9485);transform-origin:0 0">Standaardboeking</div>
<div class="a" style="left:816px;top:430px;width:74px;height:27px;background:#dcdcdc;border:1px solid #ababab"></div>
<div class="t" style="left:823.5px;top:436px;transform:scaleX(0.9344);transform-origin:0 0">Agenda</div>
<div class="a" style="left:889px;top:430px;width:111px;height:27px;background:#dcdcdc;border:1px solid #ababab"></div>
<div class="t" style="left:895.8px;top:436px;transform:scaleX(0.9563);transform-origin:0 0">Interne memo</div>
<div class="a" style="left:999px;top:430px;width:78px;height:27px;background:#dcdcdc;border:1px solid #ababab"></div>
<div class="t" style="left:1005.4px;top:436px;transform:scaleX(0.9439);transform-origin:0 0">Historiek</div>
<div class="a" style="left:1076px;top:430px;width:71px;height:27px;background:#dcdcdc;border:1px solid #ababab"></div>
<div class="t" style="left:1083.2px;top:436px;transform:scaleX(0.9456);transform-origin:0 0">Artikels</div>
<div class="a" style="left:1146px;top:430px;width:111px;height:27px;background:#dcdcdc;border:1px solid #ababab"></div>
<div class="t" style="left:1153px;top:436px;transform:scaleX(0.9922);transform-origin:0 0">Investeringen</div>
<div class="a" style="left:1256px;top:430px;width:112px;height:27px;background:#dcdcdc;border:1px solid #ababab"></div>
<div class="t" style="left:1262.9px;top:436px;transform:scaleX(0.9261);transform-origin:0 0">Communicator</div>
<div class="a" style="left:3px;top:427px;width:90px;height:30px;background:#f0f0f0;border:1px solid #ababab;border-bottom:none"></div>
<div class="a" style="left:7px;top:428px;width:71px;height:27px;border:2px solid #ff0000"></div>
<div class="t" style="left:12.2px;top:435px;transform:scaleX(0.9169);transform-origin:0 0">Algemeen</div>
<div class="t" style="left:9.8px;top:470px;transform:scaleX(0.9422);transform-origin:0 0">Taalcode</div>
<svg class="a" style="left:67.5px;top:469px;" width="10" height="10" viewBox="0 0 10 10"><g stroke="#ff1010" stroke-width="1.7" stroke-linecap="butt"><line x1="5" y1="0.3" x2="5" y2="9.7"/><line x1="1" y1="2.7" x2="9" y2="7.3"/><line x1="1" y1="7.3" x2="9" y2="2.7"/></g></svg>
<div class="a" style="left:237px;top:466px;width:172px;height:24px;background:#fff;border:1px solid #ababab;"></div>
<svg class="a" style="left:395px;top:476px;" width="8" height="5" viewBox="0 0 8 5"><polygon points="0.5,0.5 7.5,0.5 4,4.5" fill="#6e6e6e"/></svg>
<div class="t" style="left:241.8px;top:470px;transform:scaleX(0.9385);transform-origin:0 0">Nederlands</div>
<div class="t" style="left:9.8px;top:501px;transform:scaleX(0.9468);transform-origin:0 0">Valuta</div>
<svg class="a" style="left:51.5px;top:499px;" width="10" height="10" viewBox="0 0 10 10"><g stroke="#ff1010" stroke-width="1.7" stroke-linecap="butt"><line x1="5" y1="0.3" x2="5" y2="9.7"/><line x1="1" y1="2.7" x2="9" y2="7.3"/><line x1="1" y1="7.3" x2="9" y2="2.7"/></g></svg>
<div class="a" style="left:237px;top:496px;width:172px;height:24px;background:#fff;border:1px solid #ababab;"></div>
<svg class="a" style="left:395px;top:506px;" width="8" height="5" viewBox="0 0 8 5"><polygon points="0.5,0.5 7.5,0.5 4,4.5" fill="#6e6e6e"/></svg>
<div class="t" style="left:241.8px;top:501px;transform:scaleX(0.9265);transform-origin:0 0">Euro</div>
<div class="t" style="left:9.8px;top:536px;transform:scaleX(0.9330);transform-origin:0 0">Betaling</div>
<svg class="a" style="left:65px;top:533px;" width="10" height="10" viewBox="0 0 10 10"><g stroke="#ff1010" stroke-width="1.7" stroke-linecap="butt"><line x1="5" y1="0.3" x2="5" y2="9.7"/><line x1="1" y1="2.7" x2="9" y2="7.3"/><line x1="1" y1="7.3" x2="9" y2="2.7"/></g></svg>
<div class="a" style="left:237px;top:531px;width:313px;height:24px;background:#fff;border:1px solid #ababab;"></div>
<div class="t" style="left:241.8px;top:536px;transform:scaleX(0.9768);transform-origin:0 0">Contante betaling</div>
<svg class="a" style="left:517px;top:541px;" width="8" height="5" viewBox="0 0 8 5"><polygon points="0.5,0.5 7.5,0.5 4,4.5" fill="#6e6e6e"/></svg>
<svg class="a" style="left:535px;top:542px;" width="10" height="2" viewBox="0 0 10 2"><rect x="-0.2" y="0" width="2" height="2" fill="#6e6e6e"/><rect x="3.8" y="0" width="2" height="2" fill="#6e6e6e"/><rect x="7.8" y="0" width="2" height="2" fill="#6e6e6e"/></svg>
<div class="t" style="left:560.7px;top:536px;transform:scaleX(0.8714);transform-origin:0 0">CO</div>
<div class="t" style="left:180.5px;top:539px;color:rgba(0,0,0,0.07);transform:scaleX(1.0242);transform-origin:0 0">Rectangular Snip</div>
<div class="a" style="left:146px;top:533px;width:202px;height:24px;background:rgba(180,198,222,0.13);"></div>
<div class="a" style="left:146px;top:533px;width:32px;height:24px;background:rgba(150,170,195,0.03);"></div>
<div class="t" style="left:9.8px;top:566px;transform:scaleX(0.9722);transform-origin:0 0">Facturatie via</div>
<div class="a" style="left:237px;top:561px;width:313px;height:24px;background:#fff;border:1px solid #ababab;"></div>
<svg class="a" style="left:536px;top:571px;" width="8" height="5" viewBox="0 0 8 5"><polygon points="0.5,0.5 7.5,0.5 4,4.5" fill="#6e6e6e"/></svg>
<div class="t" style="left:9.8px;top:596px;transform:scaleX(1.0028);transform-origin:0 0">Kort. cont vrij van btw</div>
<svg class="a" style="left:148.4px;top:594px;" width="10" height="10" viewBox="0 0 10 10"><g stroke="#ff1010" stroke-width="1.7" stroke-linecap="butt"><line x1="5" y1="0.3" x2="5" y2="9.7"/><line x1="1" y1="2.7" x2="9" y2="7.3"/><line x1="1" y1="7.3" x2="9" y2="2.7"/></g></svg>
<div class="a" style="left:241px;top:594px;width:18px;height:18px;background:#fff;border:1px solid #adadad;"></div>
<svg class="a" style="left:241px;top:594px;" width="18" height="18" viewBox="0 0 18 18"><polyline points="4.5,10 7.5,12.8 13,6.2" fill="none" stroke="#858585" stroke-width="1.6"/></svg>
<div class="t" style="left:9.8px;top:626px;transform:scaleX(0.9337);transform-origin:0 0">Groepering</div>
<div class="a" style="left:237px;top:621px;width:479px;height:24px;background:#fff;border:1px solid #ababab;"></div>
<svg class="a" style="left:683px;top:631px;" width="8" height="5" viewBox="0 0 8 5"><polygon points="0.5,0.5 7.5,0.5 4,4.5" fill="#6e6e6e"/></svg>
<svg class="a" style="left:701px;top:632px;" width="10" height="2" viewBox="0 0 10 2"><rect x="-0.2" y="0" width="2" height="2" fill="#6e6e6e"/><rect x="3.8" y="0" width="2" height="2" fill="#6e6e6e"/><rect x="7.8" y="0" width="2" height="2" fill="#6e6e6e"/></svg>
<div class="t" style="left:9.8px;top:656px;transform:scaleX(0.9546);transform-origin:0 0">Controle RSZ nr geldig tot</div>
<div class="a" style="left:237px;top:651px;width:163px;height:24px;background:#fff;border:1px solid #ababab;"></div>
<svg class="a" style="left:386px;top:661px;" width="8" height="5" viewBox="0 0 8 5"><polygon points="0.5,0.5 7.5,0.5 4,4.5" fill="#6e6e6e"/></svg>
<div class="t" style="left:9.8px;top:686px;transform:scaleX(0.9513);transform-origin:0 0">Blokkeren voor betalingen</div>
<svg class="a" style="left:168px;top:684px;" width="10" height="10" viewBox="0 0 10 10"><g stroke="#ff1010" stroke-width="1.7" stroke-linecap="butt"><line x1="5" y1="0.3" x2="5" y2="9.7"/><line x1="1" y1="2.7" x2="9" y2="7.3"/><line x1="1" y1="7.3" x2="9" y2="2.7"/></g></svg>
<div class="a" style="left:241px;top:684px;width:18px;height:18px;background:#fff;border:1px solid #adadad;"></div>
<div class="t" style="left:9.8px;top:716px;transform:scaleX(1.0082);transform-origin:0 0">Actief</div>
<svg class="a" style="left:50px;top:714px;" width="10" height="10" viewBox="0 0 10 10"><g stroke="#ff1010" stroke-width="1.7" stroke-linecap="butt"><line x1="5" y1="0.3" x2="5" y2="9.7"/><line x1="1" y1="2.7" x2="9" y2="7.3"/><line x1="1" y1="7.3" x2="9" y2="2.7"/></g></svg>
<div class="a" style="left:241px;top:714px;width:18px;height:18px;background:#fff;border:1px solid #adadad;"></div>
<svg class="a" style="left:241px;top:714px;" width="18" height="18" viewBox="0 0 18 18"><polyline points="4.5,10 7.5,12.8 13,6.2" fill="none" stroke="#858585" stroke-width="1.6"/></svg>
<div class="t" style="left:9.8px;top:746px;transform:scaleX(0.8995);transform-origin:0 0">Melding</div>
<div class="a" style="left:237px;top:741px;width:479px;height:275px;background:#fff;border:1px solid #ababab;"></div>
<div class="a" style="left:694px;top:742px;width:21px;height:273px;background:#f0f0f0;"></div>
<div class="a" style="left:695px;top:743px;width:19px;height:20px;background:#fff;border:1px solid #e6e6e6"></div>
<svg class="a" style="left:700px;top:750px;" width="9" height="5" viewBox="0 0 9 5"><polygon points="0.5,4.5 8.5,4.5 4.5,0.5" fill="#c4c4c4"/></svg>
<div class="a" style="left:695px;top:994px;width:19px;height:20px;background:#fff;border:1px solid #e6e6e6"></div>
<svg class="a" style="left:700px;top:1002px;" width="9" height="5" viewBox="0 0 9 5"><polygon points="0.5,0.5 8.5,0.5 4.5,4.5" fill="#c4c4c4"/></svg>
<div class="a" style="left:721px;top:465px;width:208px;height:25px;background:#fff;border:1px solid #ababab;"></div>
<svg class="a" style="left:915px;top:476px;" width="8" height="5" viewBox="0 0 8 5"><polygon points="0.5,0.5 7.5,0.5 4,4.5" fill="#6e6e6e"/></svg>
<div class="t" style="left:725.7px;top:470px;transform:scaleX(0.9334);transform-origin:0 0">Handelaar</div>
<div class="a" style="left:721px;top:496px;width:144px;height:24px;background:#fff;border:1px solid #ababab;"></div>
<svg class="a" style="left:851px;top:506px;" width="8" height="5" viewBox="0 0 8 5"><polygon points="0.5,0.5 7.5,0.5 4,4.5" fill="#6e6e6e"/></svg>
<div class="t" style="left:725.7px;top:501px;transform:scaleX(0.8788);transform-origin:0 0">België</div>
<div class="a" style="left:870px;top:496px;width:319px;height:29px;background:#fff;border:1px solid #ababab;"></div>
<div class="t" style="left:874.3px;top:503px;color:#909090;transform:scaleX(0.9932);transform-origin:0 0">Btw nr.</div>
<svg class="a" style="left:1163px;top:500px;" width="24" height="21" viewBox="0 0 24 21"><defs><linearGradient id="ck" x1="0" y1="0" x2="0" y2="1"><stop offset="0" stop-color="#8ee860"/><stop offset="1" stop-color="#2ea81e"/></linearGradient></defs>
<path d="M1.5,10.5 L5.5,6.8 L9.5,10.8 L19.5,1.5 L23,5 L9.5,18.5 Z" fill="url(#ck)" stroke="#3a9a2a" stroke-width="0.8" stroke-linejoin="round"/>
<path d="M3.2,10.5 L5.5,8.5 L9.5,12.5 L19.5,3.2 L20.5,4.2 L9.5,14 Z" fill="#b8f090" opacity="0.6"/></svg>
<div class="a" style="left:721px;top:531px;width:144px;height:24px;background:#fff;border:1px solid #ababab;"></div>
<svg class="a" style="left:851px;top:541px;" width="8" height="5" viewBox="0 0 8 5"><polygon points="0.5,0.5 7.5,0.5 4,4.5" fill="#6e6e6e"/></svg>
<div class="t" style="left:725.7px;top:536px;transform:scaleX(0.8788);transform-origin:0 0">België</div>
<div class="a" style="left:870px;top:531px;width:319px;height:24px;background:#fff;border:1px solid #ababab;"></div>
<div class="a" style="left:870px;top:561px;width:319px;height:25px;background:#fff;border:1px solid #ababab;"></div>
<div class="a" style="left:870px;top:591px;width:319px;height:24px;background:#fff;border:1px solid #ababab;"></div>
<div class="t" style="left:874.3px;top:596px;transform:scaleX(0.9197);transform-origin:0 0">VRIJ</div>
<div class="t" style="left:720.6px;top:626px;transform:scaleX(0.9263);transform-origin:0 0">Ereloon</div>
<svg class="a" style="left:770px;top:624px;" width="10" height="10" viewBox="0 0 10 10"><g stroke="#ff1010" stroke-width="1.7" stroke-linecap="butt"><line x1="5" y1="0.3" x2="5" y2="9.7"/><line x1="1" y1="2.7" x2="9" y2="7.3"/><line x1="1" y1="7.3" x2="9" y2="2.7"/></g></svg>
<div class="a" style="left:952px;top:624px;width:18px;height:18px;background:#fff;border:1px solid #adadad;"></div>
<div class="t" style="left:720.6px;top:656px;transform:scaleX(0.9504);transform-origin:0 0">Rechtspersoon</div>
<svg class="a" style="left:815px;top:654px;" width="10" height="10" viewBox="0 0 10 10"><g stroke="#ff1010" stroke-width="1.7" stroke-linecap="butt"><line x1="5" y1="0.3" x2="5" y2="9.7"/><line x1="1" y1="2.7" x2="9" y2="7.3"/><line x1="1" y1="7.3" x2="9" y2="2.7"/></g></svg>
<div class="a" style="left:952px;top:654px;width:18px;height:18px;background:#fff;border:1px solid #adadad;"></div>
<svg class="a" style="left:952px;top:654px;" width="18" height="18" viewBox="0 0 18 18"><polyline points="4.5,10 7.5,12.8 13,6.2" fill="none" stroke="#858585" stroke-width="1.6"/></svg>
<div class="t" style="left:720.6px;top:686px;transform:scaleX(0.9414);transform-origin:0 0">Beroep</div>
<div class="a" style="left:949px;top:681px;width:276px;height:24px;background:#fff;border:1px solid #ababab;"></div>
<div class="t" style="left:720.6px;top:716px;transform:scaleX(0.9538);transform-origin:0 0">Nationaal nr</div>
<div class="a" style="left:949px;top:711px;width:276px;height:24px;background:#fff;border:1px solid #ababab;"></div>
<div class="t" style="left:720.6px;top:746px;transform:scaleX(0.9580);transform-origin:0 0">Geboortedatum</div>
<div class="a" style="left:949px;top:741px;width:276px;height:24px;background:#fff;border:1px solid #ababab;"></div>
<svg class="a" style="left:1211px;top:751px;" width="8" height="5" viewBox="0 0 8 5"><polygon points="0.5,0.5 7.5,0.5 4,4.5" fill="#6e6e6e"/></svg>
<div class="t" style="left:720.6px;top:776px;transform:scaleX(0.9799);transform-origin:0 0">Is derde voor betalingen</div>
<svg class="a" style="left:872.5px;top:774px;" width="10" height="10" viewBox="0 0 10 10"><g stroke="#ff1010" stroke-width="1.7" stroke-linecap="butt"><line x1="5" y1="0.3" x2="5" y2="9.7"/><line x1="1" y1="2.7" x2="9" y2="7.3"/><line x1="1" y1="7.3" x2="9" y2="2.7"/></g></svg>
<div class="a" style="left:952px;top:774px;width:18px;height:18px;background:#fff;border:1px solid #adadad;"></div>
<div class="t" style="left:720.6px;top:806px;transform:scaleX(0.9655);transform-origin:0 0">Vaste mededeling betaalopdracht</div>
<div class="a" style="left:949px;top:801px;width:276px;height:24px;background:#f0f0f0;border:1px solid #ababab;"></div>
<div class="t" style="left:720.6px;top:836px;transform:scaleX(0.9566);transform-origin:0 0">Vaste OGM betaalopdracht</div>
<div class="a" style="left:949px;top:831px;width:276px;height:24px;background:#f0f0f0;border:1px solid #ababab;"></div>
<div class="t" style="left:720.6px;top:866px;transform:scaleX(0.9573);transform-origin:0 0">Betaalbevestiging</div>
<svg class="a" style="left:831px;top:864px;" width="10" height="10" viewBox="0 0 10 10"><g stroke="#ff1010" stroke-width="1.7" stroke-linecap="butt"><line x1="5" y1="0.3" x2="5" y2="9.7"/><line x1="1" y1="2.7" x2="9" y2="7.3"/><line x1="1" y1="7.3" x2="9" y2="2.7"/></g></svg>
<div class="a" style="left:952px;top:864px;width:18px;height:18px;background:#dce8f8;border:1px solid #a8a8a8;"></div>
<div class="t" style="left:720.6px;top:896px;transform:scaleX(0.9637);transform-origin:0 0">Zendwijze betaalbevestiging</div>
<div class="a" style="left:949px;top:891px;width:276px;height:24px;background:#fff;border:1px solid #ababab;"></div>
<svg class="a" style="left:1211px;top:901px;" width="8" height="5" viewBox="0 0 8 5"><polygon points="0.5,0.5 7.5,0.5 4,4.5" fill="#6e6e6e"/></svg>
<div class="t" style="left:720.6px;top:926px;transform:scaleX(0.9651);transform-origin:0 0">Betaalbevestiging voor</div>
<div class="a" style="left:949px;top:921px;width:276px;height:24px;background:#fff;border:1px solid #ababab;"></div>
<svg class="a" style="left:1211px;top:931px;" width="8" height="5" viewBox="0 0 8 5"><polygon points="0.5,0.5 7.5,0.5 4,4.5" fill="#6e6e6e"/></svg>
<div class="a" style="left:716px;top:858px;width:520px;height:92px;border:2px solid #ff0000"></div>
</body></html>
